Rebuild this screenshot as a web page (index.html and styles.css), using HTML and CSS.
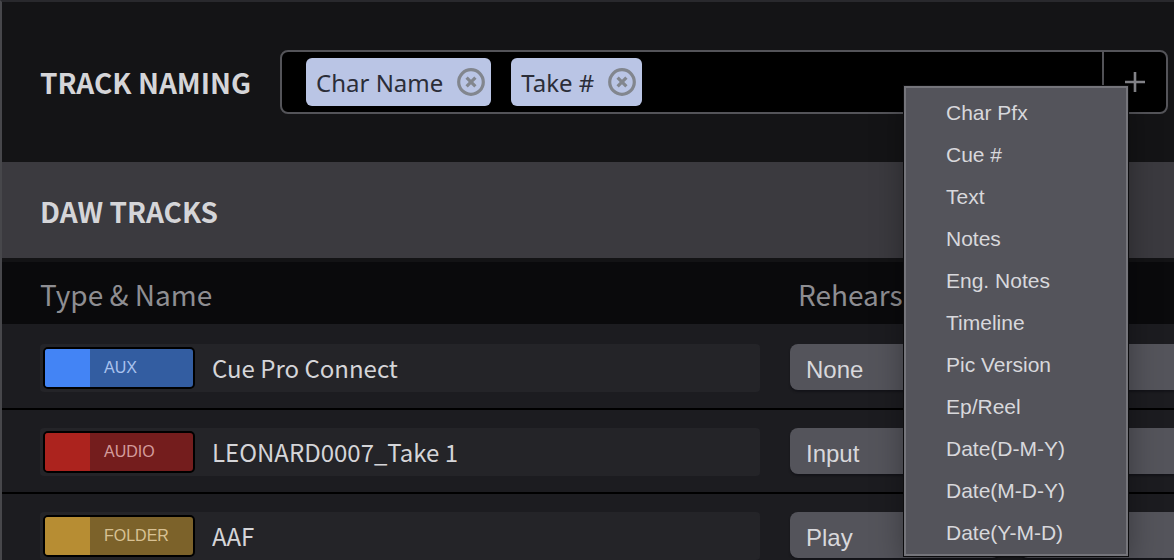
FILE: index.html
```html
<!DOCTYPE html>
<html lang="en">

<head>
    <meta charset="UTF-8">
    <meta name="viewport" content="width=device-width, initial-scale=1.0">
    <title>Track Naming</title>
    <link rel="stylesheet" href="styles.css">
</head>

<body>
    <section class="naming">
        <h2 class="title">TRACK NAMING</h2>
        <div class="naming-field">
            <div class="chips">
                <span class="chip">
                    Char Name
                    <button class="chip-remove" type="button" aria-label="Remove Char Name">
                        <svg viewBox="0 0 28 28" width="28" height="28">
                            <circle cx="14" cy="14" r="12.3" />
                            <path d="M9.6 9.6l8.8 8.8M18.4 9.6l-8.8 8.8" />
                        </svg>
                    </button>
                </span>
                <span class="chip">
                    Take #
                    <button class="chip-remove" type="button" aria-label="Remove Take #">
                        <svg viewBox="0 0 28 28" width="28" height="28">
                            <circle cx="14" cy="14" r="12.3" />
                            <path d="M9.6 9.6l8.8 8.8M18.4 9.6l-8.8 8.8" />
                        </svg>
                    </button>
                </span>
            </div>
            <button class="add-btn" type="button" aria-label="Add field" aria-haspopup="menu" aria-expanded="true">
                <svg viewBox="0 0 20 20" width="20" height="20">
                    <path d="M10 0v20M0 10h20" />
                </svg>
            </button>
            <div class="menu" role="menu">
                <button type="button" role="menuitem">Char Pfx</button>
                <button type="button" role="menuitem">Cue #</button>
                <button type="button" role="menuitem">Text</button>
                <button type="button" role="menuitem">Notes</button>
                <button type="button" role="menuitem">Eng. Notes</button>
                <button type="button" role="menuitem">Timeline</button>
                <button type="button" role="menuitem">Pic Version</button>
                <button type="button" role="menuitem">Ep/Reel</button>
                <button type="button" role="menuitem">Date(D-M-Y)</button>
                <button type="button" role="menuitem">Date(M-D-Y)</button>
                <button type="button" role="menuitem">Date(Y-M-D)</button>
            </div>
        </div>
    </section>

    <section class="tracks">
        <div class="tracks-header">
            <h2 class="title">DAW TRACKS</h2>
        </div>
        <table class="track-table">
            <colgroup>
                <col class="col-name">
                <col class="col-mode">
                <col>
            </colgroup>
            <thead>
                <tr>
                    <th>Type &amp; Name</th>
                    <th>Rehearse</th>
                    <th></th>
                </tr>
            </thead>
            <tbody>
                <tr>
                    <td>
                        <div class="track">
                            <span class="badge aux">AUX</span>
                            <input class="track-name" type="text" value="Cue Pro Connect" aria-label="Track name">
                        </div>
                    </td>
                    <td>
                        <select class="mode" aria-label="Rehearse">
                            <option selected>None</option>
                            <option>Input</option>
                            <option>Play</option>
                        </select>
                    </td>
                    <td>
                        <select class="mode" aria-label="Record">
                            <option selected>None</option>
                            <option>Input</option>
                            <option>Play</option>
                        </select>
                    </td>
                </tr>
                <tr>
                    <td>
                        <div class="track">
                            <span class="badge audio">AUDIO</span>
                            <input class="track-name" type="text" value="LEONARD0007_Take 1" aria-label="Track name">
                        </div>
                    </td>
                    <td>
                        <select class="mode" aria-label="Rehearse">
                            <option>None</option>
                            <option selected>Input</option>
                            <option>Play</option>
                        </select>
                    </td>
                    <td>
                        <select class="mode" aria-label="Record">
                            <option>None</option>
                            <option selected>Input</option>
                            <option>Play</option>
                        </select>
                    </td>
                </tr>
                <tr>
                    <td>
                        <div class="track">
                            <span class="badge folder">FOLDER</span>
                            <input class="track-name" type="text" value="AAF" aria-label="Track name">
                        </div>
                    </td>
                    <td>
                        <select class="mode" aria-label="Rehearse">
                            <option>None</option>
                            <option>Input</option>
                            <option selected>Play</option>
                        </select>
                    </td>
                    <td>
                        <select class="mode" aria-label="Record">
                            <option>None</option>
                            <option>Input</option>
                            <option selected>Play</option>
                        </select>
                    </td>
                </tr>
            </tbody>
        </table>
    </section>
</body>

</html>
```
FILE: styles.css
```css
* {
    margin: 0;
    padding: 0;
    box-sizing: border-box;
}

body {
    height: 100vh;
    overflow: hidden;
    background: #1c1c20;
    border-top: 2px solid #29292d;
    border-left: 2px solid #47474b;
    color: #d5d5d8;
    font-family: "Noto Sans CJK JP", "Open Sans", sans-serif;
}

button {
    background: none;
    border: none;
    cursor: pointer;
}

svg {
    display: block;
    fill: none;
}

.title {
    font-size: 28px;
    line-height: 40px;
    font-weight: 700;
    white-space: nowrap;
}

/* Track naming */

.naming {
    display: flex;
    align-items: center;
    gap: 29px;
    height: 160px;
    padding: 0 6px 0 38px;
    background: #141416;
}

.naming-field {
    position: relative;
    flex: 1;
    display: flex;
    height: 64px;
    background: #000;
    border: 2px solid #545459;
    border-radius: 8px;
}

.chips {
    flex: 1;
    display: flex;
    align-items: center;
    gap: 20px;
    padding: 0 24px;
}

.chip {
    display: flex;
    align-items: center;
    gap: 14px;
    height: 48px;
    padding: 0 6px 0 10px;
    background: #bac5e5;
    border-radius: 6px;
    color: #2b2d38;
    font-family: "Noto Sans", sans-serif;
    font-size: 24px;
    white-space: nowrap;
}

.chip-remove svg {
    stroke: #82868e;
    stroke-width: 3.2;
}

.add-btn {
    width: 64px;
    display: flex;
    align-items: center;
    justify-content: center;
    border-left: 2px solid #545459;
}

.add-btn svg {
    stroke: #85858a;
    stroke-width: 2.6;
}

.menu {
    position: absolute;
    top: 34px;
    right: 38px;
    z-index: 10;
    width: 224px;
    padding-top: 4px;
    background: #54545b;
    border: 2px solid #75757b;
    box-shadow: 0 0 0 1px #0c0c0e, 0 8px 30px rgba(0, 0, 0, 0.35);
}

.menu button {
    display: block;
    width: 100%;
    height: 42px;
    padding-left: 40px;
    color: #d8d8dc;
    font-family: "Liberation Sans", sans-serif;
    font-size: 21px;
    text-align: left;
}

/* DAW tracks */

.tracks-header {
    display: flex;
    align-items: center;
    height: 96px;
    padding: 2px 38px 0;
    background: #3b3a3f;
}

.track-table {
    width: 100%;
    table-layout: fixed;
    border-collapse: separate;
    border-spacing: 0;
}

.col-name {
    width: 788px;
}

.col-mode {
    width: 230px;
}

.track-table th {
    height: 68px;
    padding: 2px 8px 0;
    background: #0a0a0c;
    border-top: 4px solid #131315;
    border-bottom: 2px solid #1c1c20;
    color: #8e8e92;
    font-size: 28px;
    line-height: 40px;
    font-weight: 400;
    text-align: left;
}

.track-table th:first-child {
    padding-left: 38px;
}

.track-table td {
    height: 84px;
    padding: 18px 20px 16px 0;
    border-bottom: 2px solid #000;
    vertical-align: top;
}

.track-table td:first-child {
    padding-left: 38px;
    padding-right: 30px;
}

.track-table td:last-child {
    padding-right: 0;
}

.track {
    display: flex;
    align-items: center;
    height: 48px;
    padding: 0 3px;
    background: #242428;
    border-radius: 4px;
}

.badge {
    display: flex;
    align-items: center;
    gap: 14px;
    width: 152px;
    height: 42px;
    border: 2px solid #000;
    border-radius: 5px;
    font-family: "Liberation Sans", sans-serif;
    font-size: 16px;
    line-height: 40px;
}

.badge::before {
    content: "";
    align-self: stretch;
    width: 45px;
    border-radius: 3px 0 0 3px;
}

.aux {
    background: #335da1;
    color: #a9c2ee;
}

.aux::before {
    background: #4384f5;
}

.audio {
    background: #741d1d;
    color: #d39b9b;
}

.audio::before {
    background: #ac231e;
}

.folder {
    background: #7c622a;
    color: #d8c193;
}

.folder::before {
    background: #b78d33;
}

.track-name {
    flex: 1;
    min-width: 0;
    height: 48px;
    padding: 0 0 2px 17px;
    background: none;
    border: none;
    outline: none;
    color: #d5d5d8;
    font-family: inherit;
    font-size: 24px;
}

.mode {
    display: block;
    width: 100%;
    height: 46px;
    padding: 4px 16px 0;
    appearance: none;
    background: #54545b;
    border: none;
    border-radius: 8px;
    box-shadow: 0 2px 2px #141419;
    color: #d8d8dc;
    font-family: "Liberation Sans", sans-serif;
    font-size: 24px;
}

/* last column runs on to the edge of the panel */
td:last-child .mode {
    border-radius: 8px 0 0 8px;
}
```
